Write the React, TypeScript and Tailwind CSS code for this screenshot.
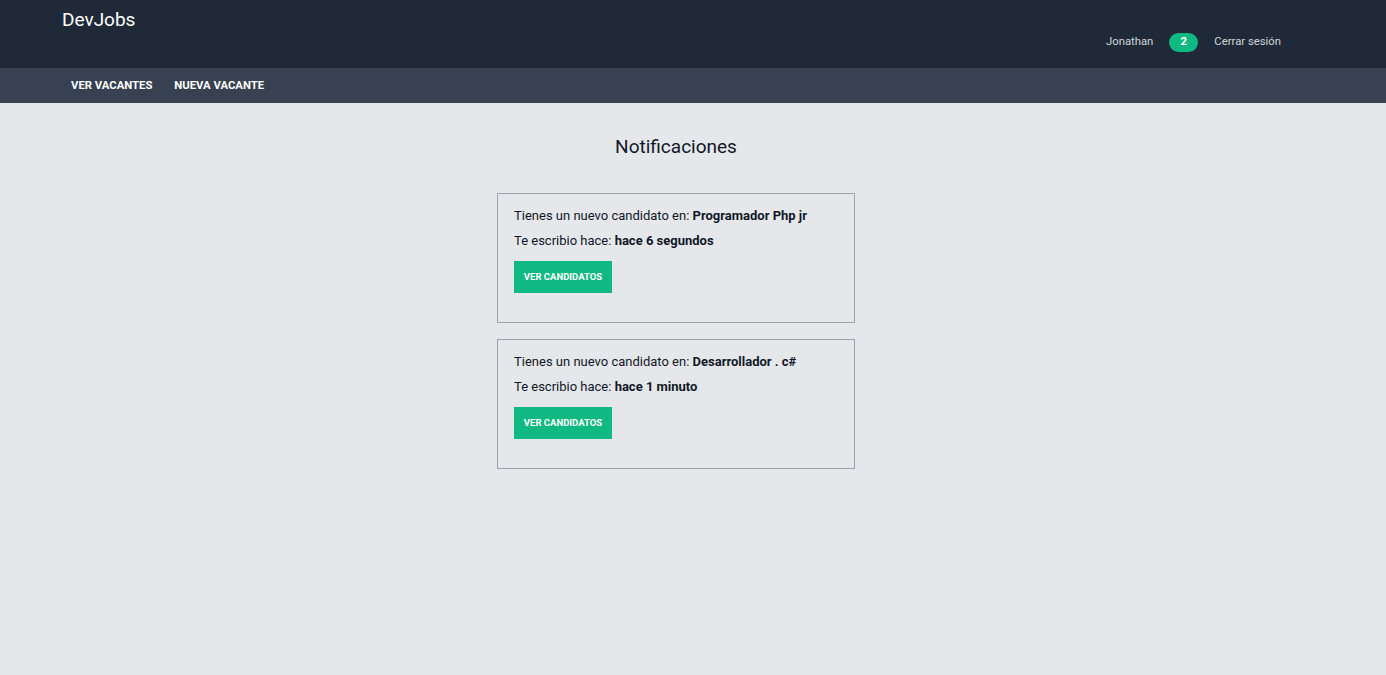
const notifications = [
  { vacante: "Programador Php jr", hace: "hace 6 segundos" },
  { vacante: "Desarrollador . c#", hace: "hace 1 minuto" },
];

export default function App() {
  return (
    <div className="min-h-screen bg-[#e5e7eb]" style={{ fontFamily: "Roboto, 'Liberation Sans', sans-serif" }}>
      {/* Header */}
      <header className="bg-[#1f2937] h-[68px]">
        <div className="ml-[45px] w-[1262px] pl-[17px] pr-[26px] flex justify-between h-full">
          <a className="text-white text-[19px] leading-none pt-[10px]">DevJobs</a>
          <div className="flex items-center gap-4 text-[11.3px] text-[#d1d5db] pt-[16px]">
            <span>Jonathan</span>
            <span className="bg-[#10b981] text-white font-bold rounded-full w-[29px] h-[19px] flex items-center justify-center">2</span>
            <span>Cerrar sesión</span>
          </div>
        </div>
      </header>

      {/* Nav */}
      <nav className="bg-[#374151] h-[35px]">
        <div className="ml-[45px] w-[1262px] pl-[26px] flex items-center h-full gap-[22px] pt-[2px]">
          <a className="text-white text-[11.3px] font-bold uppercase">Ver vacantes</a>
          <a className="text-white text-[11.3px] font-bold uppercase">Nueva vacante</a>
        </div>
      </nav>

      <main className="ml-[45px] w-[1262px] pt-[29px]">
        <h1 className="text-center text-[19px] leading-[30px] text-[#111827] mb-[31px]">Notificaciones</h1>
        <div className="flex flex-col items-center gap-4">
          {notifications.map((n, i) => (
            <div key={i} className="w-[358px] h-[130px] border border-[#9ca3af] px-4 py-3 text-[13px] leading-[19.5px] text-[#111827]">
              <p>Tienes un nuevo candidato en: <span className="font-bold">{n.vacante}</span></p>
              <p className="mt-[5px]">Te escribio hace: <span className="font-bold">{n.hace}</span></p>
              <button className="mt-[11px] bg-[#10b981] text-white text-[9.5px] font-bold uppercase w-[98px] h-[32px]">
                Ver candidatos
              </button>
            </div>
          ))}
        </div>
      </main>
    </div>
  );
}
